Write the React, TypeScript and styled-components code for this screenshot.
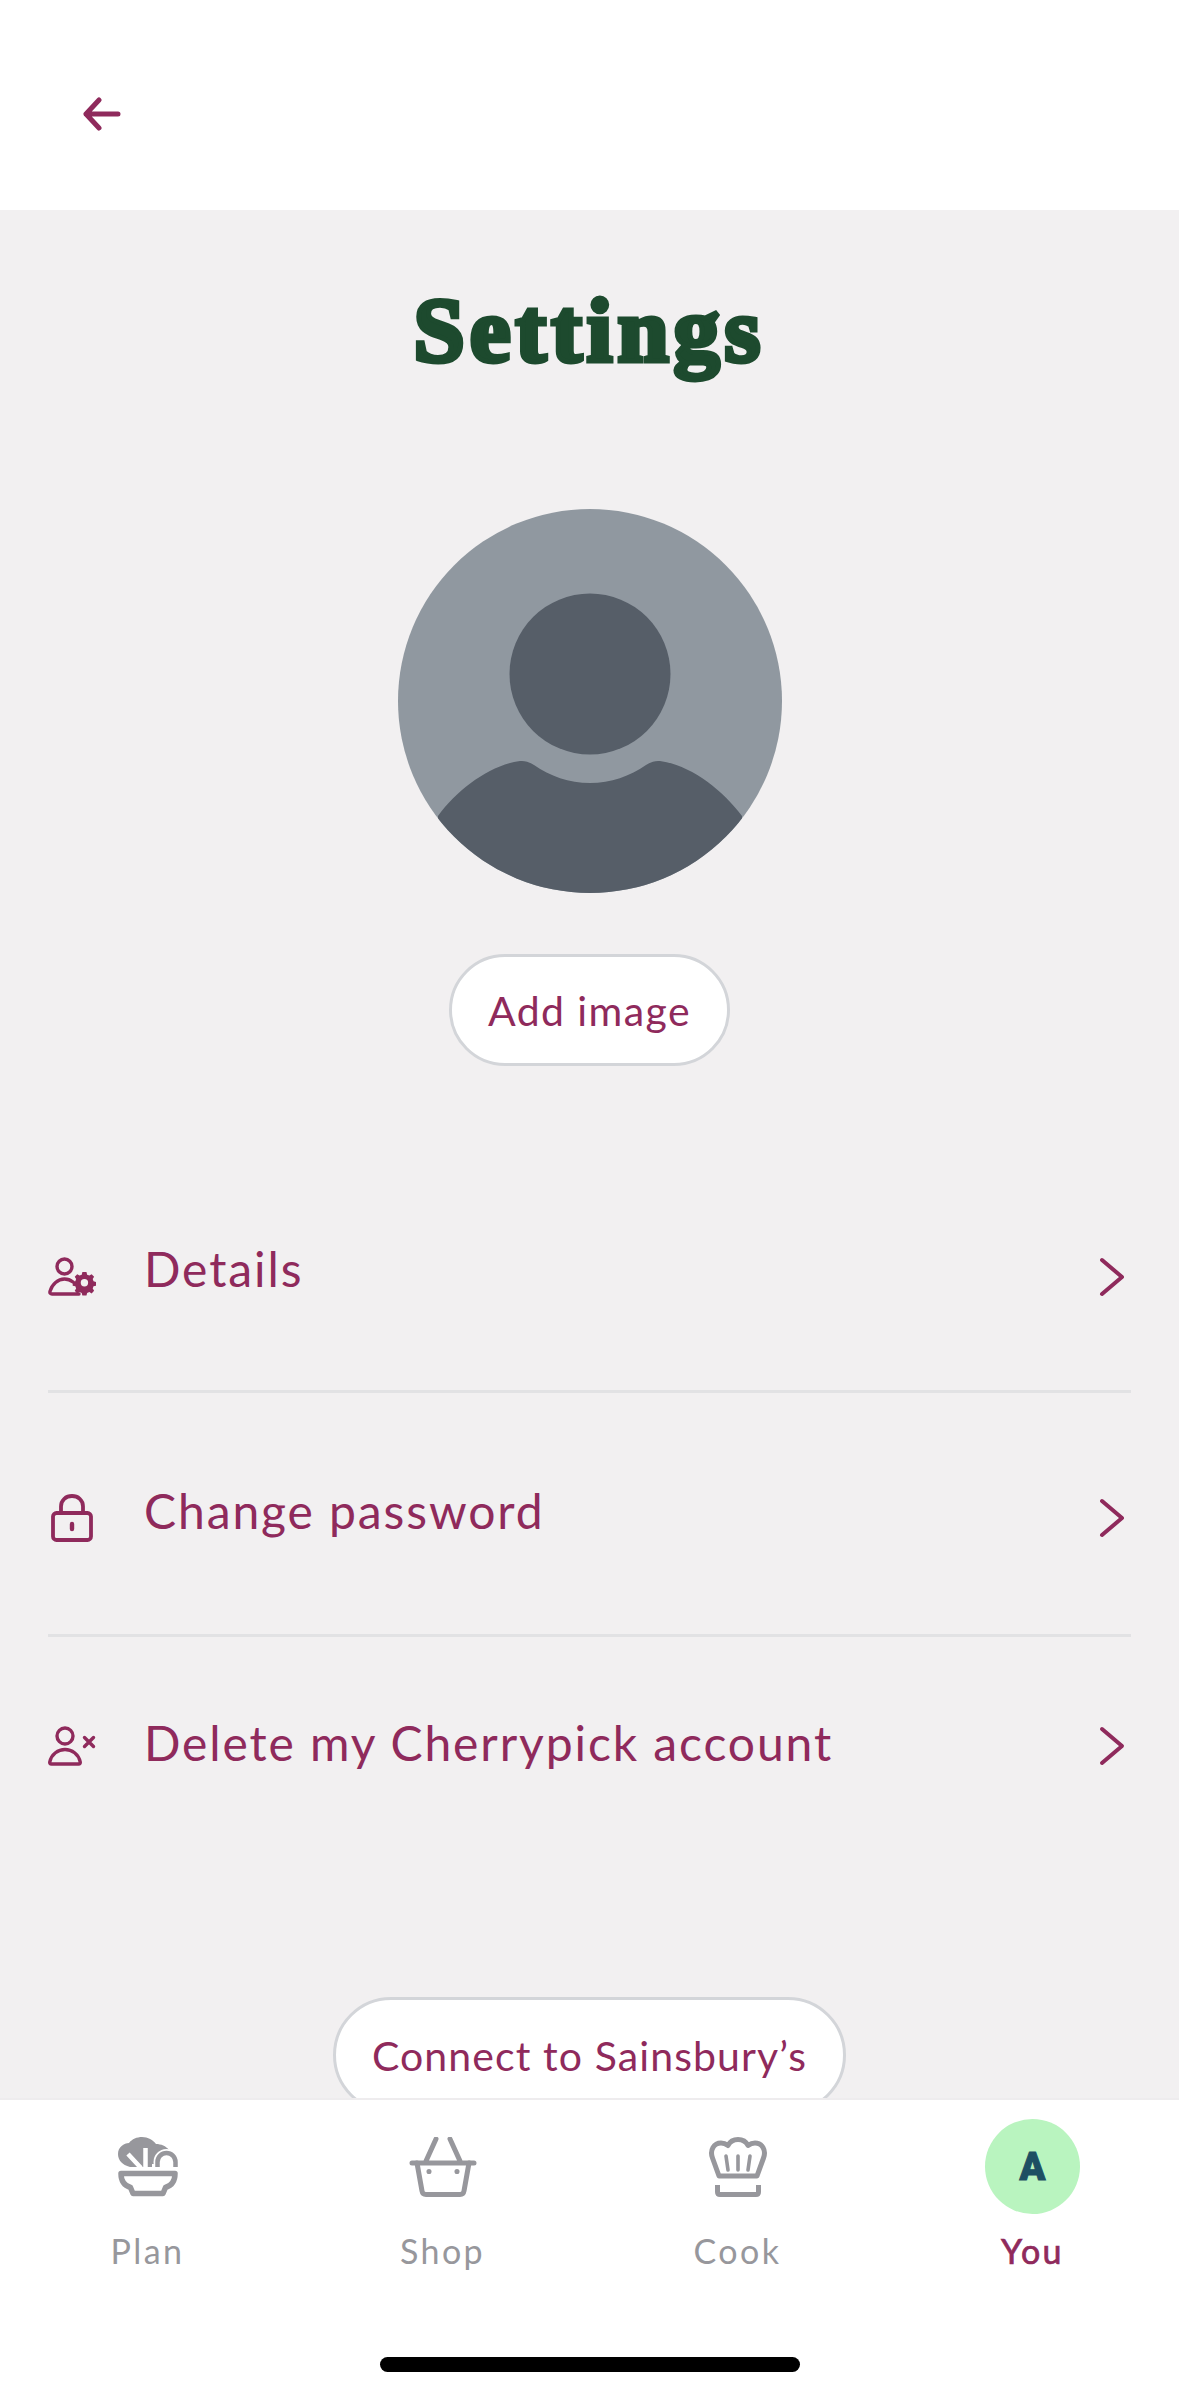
import { createGlobalStyle, styled } from 'styled-components';

const GlobalStyle = createGlobalStyle`
	html, body {
		margin: 0;
		padding: 0;
		background: #ffffff;
	}
`;

const BERRY = '#8f2a5c';
const GREY = '#97979c';

export default function App() {
	return (
		<>
			<GlobalStyle />
			<Page>
				<Header>
					<BackArrow />
				</Header>
				<Main>
					<Title>Settings</Title>
					<Avatar />
					<PillButton>Add image</PillButton>
					<Menu>
						<MenuRow $height={263} $lift={16} $shift={36}>
							<IconSlot>
								<PersonGearIcon />
							</IconSlot>
							<RowLabel>Details</RowLabel>
							<Chevron />
						</MenuRow>
						<MenuRow $height={244} $lift={16} $shift={9} $divided>
							<IconSlot>
								<LockIcon />
							</IconSlot>
							<RowLabel>Change password</RowLabel>
							<Chevron />
						</MenuRow>
						<MenuRow $height={220} $lift={6} $shift={0} $divided>
							<IconSlot>
								<PersonCrossIcon />
							</IconSlot>
							<RowLabel>Delete my Cherrypick account</RowLabel>
							<Chevron />
						</MenuRow>
					</Menu>
					<ConnectButton>Connect to Sainsbury’s</ConnectButton>
				</Main>
				<TabBar>
					<Tabs>
						<Tab>
							<TabIcon>
								<PlanIcon />
							</TabIcon>
							<TabLabel>Plan</TabLabel>
						</Tab>
						<Tab>
							<TabIcon>
								<ShopIcon />
							</TabIcon>
							<TabLabel>Shop</TabLabel>
						</Tab>
						<Tab>
							<TabIcon>
								<CookIcon />
							</TabIcon>
							<TabLabel>Cook</TabLabel>
						</Tab>
						<Tab>
							<TabIcon>
								<Initial>A</Initial>
							</TabIcon>
							<TabLabel $active>You</TabLabel>
						</Tab>
					</Tabs>
					<HomeIndicator />
				</TabBar>
			</Page>
		</>
	);
}

const BackArrow = () => (
	<svg width="38" height="34" viewBox="0 0 38 34" fill="none" stroke={BERRY} strokeWidth="5" strokeLinecap="round" strokeLinejoin="round">
		<path d="M35 17H3M16 3 3 17l13 14" />
	</svg>
);

const Avatar = () => (
	<AvatarSvg width="384" height="384" viewBox="0 0 384 384">
		<defs>
			<clipPath id="avatar-clip">
				<circle cx="192" cy="192" r="192" />
			</clipPath>
		</defs>
		<circle cx="192" cy="192" r="192" fill="#9098a0" />
		<g clipPath="url(#avatar-clip)" fill="#565e68">
			<circle cx="192" cy="165" r="80.5" />
			<path d="M40 307C60 280 92 256 122 252c5-.5 9 1 14 4 16 11 35 18 56 18s40-7 56-18c5-3 9-4.500 14-4 30 4 62 28 82 55v77H40Z" />
		</g>
	</AvatarSvg>
);

const Chevron = () => (
	<ChevronSvg width="28" height="40" viewBox="0 0 28 40" fill="none" stroke={BERRY} strokeWidth="4" strokeLinecap="round" strokeLinejoin="round">
		<path d="M4 3l20 17L4 37" />
	</ChevronSvg>
);

const PersonGearIcon = () => (
	<svg width="48" height="40" viewBox="0 0 48 40" fill="none" stroke={BERRY} strokeWidth="3.4" strokeLinecap="round" strokeLinejoin="round">
		<circle cx="16.5" cy="9.5" r="7.5" />
		<path d="M31 37H4c-1.6 0-2.4-1-2-2.6C4 27 10 22 16.5 22c3 0 6 1 8.5 3" />
		<path fill={BERRY} stroke="none" fillRule="evenodd" d="M34 14h5l.8 3.2 2.7 1.1 2.8-1.7 3 3.2-1.7 2.7 1 2.7 3.2.8v4.6l-3.2.8-1 2.7 1.7 2.7-3 3.2-2.8-1.7-2.7 1.1-.8 3.2h-5l-.8-3.2-2.7-1.1-2.8 1.700-3-3.200 1.700-2.700-1-2.700-3.200-.8v-4.600l3.200-.8 1-2.700-1.700-2.700 3-3.200 2.800 1.700 2.700-1.100ZM36.500 22.500a4.500 4.500 0 1 0 0 9 4.500 4.500 0 0 0 0-9Z" transform="translate(6.5 3.6) scale(.82)" />
	</svg>
);

const LockIcon = () => (
	<svg width="44" height="48" viewBox="0 0 44 48" fill="none" stroke={BERRY} strokeWidth="3.8" strokeLinecap="round" strokeLinejoin="round">
		<rect x="3" y="19" width="38" height="27" rx="3.5" />
		<path d="M11 19v-6.5C11 6 16 2 22 2s11 4 11 10.5V19" />
		<path d="M22 30v5" strokeWidth="4.4" />
	</svg>
);

const PersonCrossIcon = () => (
	<svg width="48" height="40" viewBox="0 0 48 40" fill="none" stroke={BERRY} strokeWidth="3.4" strokeLinecap="round" strokeLinejoin="round">
		<circle cx="17" cy="10" r="8" />
		<path d="M3.5 38c-1.4 0-2-.9-1.700-2.200C3.600 28 10 23.500 17 23.500s13.400 4.500 15.200 12.300c.3 1.300-.3 2.200-1.700 2.200Z" />
		<path d="M36.500 11.500l9 9M45.500 11.500l-9 9" />
	</svg>
);

const PlanIcon = () => (
	<svg width="60" height="60" viewBox="0 0 60 60" fill="none">
		<path fill={GREY} d="M12 30C4 28 0 23 0 17 0 10 6 6 11 6c3-4 8-6 13-6 6 0 11 3 14 7 5 0 10 2 13 6v17Z" />
		<path stroke="#fff" strokeWidth="4.5" d="M10 17l13 14M27.500 11v20" />
		<circle cx="48.500" cy="25" r="13" fill="#fff" />
		<path fill="#fff" d="M34 27h26v5H34Z" />
		<path stroke={GREY} strokeWidth="4.5" d="M39.500 30v-5a9 9 0 0 1 18 0v5" />
		<path stroke={GREY} strokeWidth="5.500" strokeLinejoin="round" strokeLinecap="round" d="M3 36.500h54c0 7-3 12-9.500 14l-2.500 6H15l-2.500-6C6 48.500 3 43.500 3 36.500Z" />
	</svg>
);

const ShopIcon = () => (
	<svg width="68" height="60" viewBox="0 0 68 60" fill="none" stroke={GREY} strokeWidth="5" strokeLinecap="round" strokeLinejoin="round">
		<path d="M3 26h62M27 2l-10 22M41 2l10 22" />
		<path d="M8 26l5 28c.3 2 1.600 3.500 4 3.500h34c2.400 0 3.700-1.500 4-3.500l5-28" />
		<circle cx="20" cy="34.500" r="1.300" fill={GREY} strokeWidth="2.500" />
		<circle cx="48" cy="34.500" r="1.300" fill={GREY} strokeWidth="2.500" />
	</svg>
);

const CookIcon = () => (
	<svg width="60" height="60" viewBox="0 0 60 60" fill="none" stroke={GREY} strokeWidth="5" strokeLinecap="round" strokeLinejoin="round">
		<path d="M11 39 4.500 21C1.500 13 6 6 13 6c3 0 5 1 7 2.500C22 4.500 26 2.500 30 2.500s8 2 10 6C42 7 44 6 47 6c7 0 11.500 7 8.500 15L49 39Z" />
		<path d="M18 19l2 14M30 19v14M42 19l-2 14" strokeWidth="3.600" />
		<path d="M9.500 48v7c0 1.500 1 2.500 2.500 2.500h36c1.500 0 2.500-1 2.500-2.500v-7" strokeLinecap="butt" />
	</svg>
);

const Page = styled.div`
	width: 1179px;
	height: 2396px;
	display: flex;
	flex-direction: column;
	overflow: hidden;
	background: #ffffff;
`;

const Header = styled.header`
	flex: 0 0 210px;
	box-sizing: border-box;
	padding: 97px 0 0 83px;
	background: #ffffff;
`;

const Main = styled.main`
	flex: 1;
	min-height: 0;
	overflow: hidden;
	display: flex;
	flex-direction: column;
	align-items: center;
	background: #f2f0f1;
`;

const Title = styled.h1`
	margin: 61px 0 0;
	height: 118px;
	line-height: 118px;
	font-family: 'Liberation Serif', serif;
	font-weight: 700;
	font-size: 92px;
	letter-spacing: 5px;
	color: #1d4a2e;
	-webkit-text-stroke: 5px #1d4a2e;
`;

const AvatarSvg = styled.svg`
	flex: none;
	margin-top: 120px;
`;

const PillButton = styled.div`
	flex: none;
	box-sizing: border-box;
	width: 281px;
	height: 112px;
	margin-top: 61px;
	display: flex;
	align-items: center;
	justify-content: center;
	background: #ffffff;
	border: 3px solid #d3d5d9;
	border-radius: 56px;
	font-family: 'Lato', sans-serif;
	font-size: 41px;
	letter-spacing: 1.4px;
	color: ${BERRY};
`;

const ConnectButton = styled(PillButton)`
	width: 513px;
	height: 116px;
	margin-top: 143px;
	border-radius: 58px;
	letter-spacing: 1.1px;
`;

const Menu = styled.div`
	flex: none;
	align-self: stretch;
	margin: 61px 48px 0;
`;

const MenuRow = styled.div<{ $height: number; $lift: number; $shift: number; $divided?: boolean }>`
	box-sizing: border-box;
	height: ${({ $height }) => $height}px;
	padding-top: ${({ $shift }) => $shift}px;
	display: flex;
	align-items: center;
	border-top: ${({ $divided }) => ($divided ? '3px solid #e2e2e4' : '0')};

	& > span:nth-child(2) {
		padding-bottom: ${({ $lift }) => $lift}px;
	}
`;

const IconSlot = styled.div`
	flex: 0 0 96px;
	display: flex;
	justify-content: center;
	padding-right: 48px;
	box-sizing: border-box;
`;

const RowLabel = styled.span`
	flex: 1;
	font-family: 'Lato', sans-serif;
	font-size: 48px;
	letter-spacing: 1.9px;
	color: ${BERRY};
`;

const ChevronSvg = styled.svg`
	flex: none;
	margin-right: 5px;
`;

const TabBar = styled.nav`
	flex: 0 0 298px;
	display: flex;
	flex-direction: column;
	align-items: center;
	background: #ffffff;
	border-top: 2px solid #eeecee;
	box-sizing: border-box;
`;

const Tabs = styled.div`
	align-self: stretch;
	display: grid;
	grid-template-columns: repeat(4, 295px);
	padding-top: 19px;
`;

const Tab = styled.div`
	display: flex;
	flex-direction: column;
	align-items: center;
`;

const TabIcon = styled.div`
	height: 95px;
	display: flex;
	align-items: center;
	justify-content: center;

	& > svg {
		margin-top: 1px;
	}
`;

const Initial = styled.div`
	width: 95px;
	height: 95px;
	border-radius: 50%;
	background: #b9f4bf;
	display: flex;
	align-items: center;
	justify-content: center;
	font-family: 'Roboto', sans-serif;
	font-weight: 900;
	font-size: 38px;
	color: #1d4f63;
	-webkit-text-stroke: 1px #1d4f63;
`;

const TabLabel = styled.span<{ $active?: boolean }>`
	margin-top: 15px;
	font-family: 'Lato', sans-serif;
	font-size: 34px;
	line-height: 44px;
	letter-spacing: 2.4px;
	color: ${({ $active }) => ($active ? BERRY : GREY)};
	-webkit-text-stroke: ${({ $active }) => ($active ? '0.7px' : '0')} ${BERRY};
`;

const HomeIndicator = styled.div`
	width: 420px;
	height: 15px;
	margin-top: 84px;
	border-radius: 8px;
	background: #000000;
`;
